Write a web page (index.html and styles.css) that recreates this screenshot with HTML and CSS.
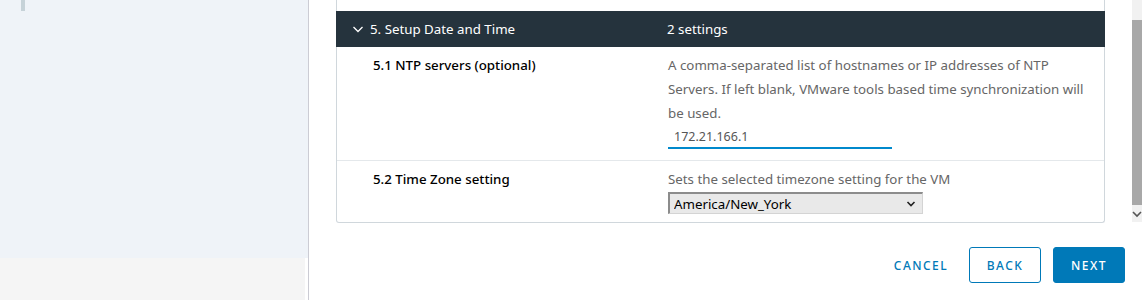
FILE: index.html
```html
<!DOCTYPE html>
<html lang="en">
<head>
    <meta charset="UTF-8">
    <title>Deploy OVF Template - Customize template</title>
    <link rel="stylesheet" href="styles.css">
</head>
<body>
    <aside class="sidebar">
        <div class="sidebar-steps">
            <span class="step-marker"></span>
        </div>
        <div class="sidebar-foot"></div>
    </aside>
    <main class="wizard">
        <div class="wizard-body">
            <div class="wizard-content">
                <div class="card">
                    <div class="card-top"></div>
                    <div class="group-header">
                        <div class="col-label">
                            <svg class="chevron" width="12" height="12" viewBox="0 0 12 12">
                                <path d="M1.5 4 L6 8.5 L10.5 4" fill="none" stroke="#fff" stroke-width="1.3"/>
                            </svg>
                            <span>5. Setup Date and Time</span>
                        </div>
                        <div class="col-value">2 settings</div>
                    </div>
                    <div class="setting-row row-ntp">
                        <div class="col-label setting-name">5.1 NTP servers (optional)</div>
                        <div class="col-value">
                            <p class="setting-desc">A comma-separated list of hostnames or IP addresses of NTP Servers. If left blank, VMware tools based time synchronization will be used.</p>
                            <input class="text-input" type="text" value="172.21.166.1">
                        </div>
                    </div>
                    <div class="setting-row row-tz">
                        <div class="col-label setting-name">5.2 Time Zone setting</div>
                        <div class="col-value">
                            <p class="setting-desc">Sets the selected timezone setting for the VM</p>
                            <div class="select-wrap">
                                <select class="select-input">
                                    <option>America/New_York</option>
                                </select>
                                <svg class="select-caret" width="10" height="8" viewBox="0 0 10 8">
                                    <path d="M1.5 2 L5 5.5 L8.5 2" fill="none" stroke="#222" stroke-width="1.6"/>
                                </svg>
                            </div>
                        </div>
                    </div>
                </div>
            </div>
            <div class="scrollbar">
                <div class="scroll-track"></div>
                <div class="scroll-thumb"></div>
                <div class="scroll-arrow">
                    <svg width="10" height="8" viewBox="0 0 10 8">
                        <path d="M1 2 L5 6 L9 2" fill="none" stroke="#555" stroke-width="1.6"/>
                    </svg>
                </div>
            </div>
        </div>
        <div class="wizard-footer">
            <button class="btn btn-link" type="button">Cancel</button>
            <button class="btn btn-outline" type="button">Back</button>
            <button class="btn btn-primary" type="button">Next</button>
        </div>
    </main>
</body>
</html>
```

FILE: styles.css
```css
* {
    box-sizing: border-box;
    font-family: 'Noto Sans', 'Liberation Sans', sans-serif;
}

html, body {
    margin: 0;
    height: 300px;
    overflow: hidden;
}

body {
    display: flex;
    background: #fff;
}

.sidebar {
    width: 309px;
    border-right: 1px solid #ccccd4;
    display: flex;
    flex-direction: column;
}

.sidebar-steps {
    height: 258px;
    background: #eff3f8;
    padding-left: 21px;
}

.step-marker {
    display: block;
    width: 4px;
    height: 11px;
    background: #c6d2d8;
}

.sidebar-foot {
    flex: 1;
    background: #f5f5f5;
    margin-right: 3px;
}

.wizard {
    flex: 1;
    display: flex;
    flex-direction: column;
}

.wizard-body {
    height: 222px;
    display: flex;
}

.wizard-content {
    flex: 1;
    padding: 0 27px 0 27px;
}

.card {
    border: 1px solid #d0d7dc;
    border-top: none;
    border-radius: 0 0 3px 3px;
}

.card-top {
    height: 12px;
    border-bottom: 1px solid #e4e8eb;
}

.group-header {
    display: flex;
    align-items: center;
    height: 36px;
    background: #25333d;
    color: #fff;
    font-size: 13.3px;
    margin: -1px -1px 0 -1px;
}

.group-header .col-label {
    display: flex;
    align-items: center;
    gap: 6px;
    padding-left: 16px;
}

.col-label {
    width: 331px;
    flex-shrink: 0;
    padding-left: 36px;
}

.col-value {
    flex: 1;
    padding-right: 12px;
}

.setting-row {
    display: flex;
    font-size: 13.3px;
    line-height: 24px;
}

.row-ntp {
    padding: 6px 0 11px;
    border-bottom: 1px solid #e4e8eb;
}

.row-tz {
    padding: 6px 0 8px;
}

.setting-name {
    color: #000;
    font-weight: 500;
}

.setting-desc {
    margin: 0;
    color: #666;
}

.text-input {
    display: block;
    width: 224px;
    height: 24px;
    border: none;
    border-bottom: 2px solid #0089cc;
    padding: 0 6px;
    font-size: 12.5px;
    color: #565656;
    background: transparent;
    outline: none;
}

.select-wrap {
    position: relative;
    width: 255px;
    margin-top: 1px;
}

.select-input {
    display: block;
    width: 100%;
    height: 22px;
    appearance: none;
    background: #e9e9e9;
    border-style: solid;
    border-width: 2px 1px 1px 2px;
    border-color: #8c8c8c #d4d4d4 #d4d4d4 #8c8c8c;
    padding: 0 4px;
    font-size: 13.3px;
    color: #000;
}

.select-caret {
    position: absolute;
    right: 7px;
    top: 8px;
}

.scrollbar {
    width: 10px;
    display: flex;
    flex-direction: column;
    background: #f1f1f1;
}

.scroll-track {
    height: 20px;
}

.scroll-thumb {
    height: 185px;
    background: #a8a8a8;
}

.scroll-arrow {
    flex: 1;
    display: flex;
    justify-content: center;
    align-items: center;
}

.wizard-footer {
    display: flex;
    justify-content: flex-end;
    padding: 25px 17px 0 0;
    gap: 12px;
}

.btn {
    height: 36px;
    min-width: 72px;
    padding: 0 12px;
    border-radius: 3px;
    font-size: 12px;
    font-weight: 500;
    letter-spacing: 0.12em;
    text-transform: uppercase;
    cursor: pointer;
}

.btn-link {
    border: 1px solid transparent;
    background: transparent;
    color: #0079b8;
    margin-right: -4px;
}

.btn-outline {
    border: 1px solid #0079b8;
    background: #fff;
    color: #0079b8;
}

.btn-primary {
    border: 1px solid #0079b8;
    background: #0079b8;
    color: #fff;
}
```
